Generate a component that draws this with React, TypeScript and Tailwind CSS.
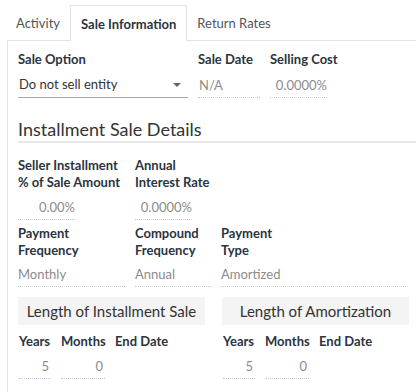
import React from "react";

const F = { fontFamily: "Lato, 'Open Sans', sans-serif" };

function Label({ children, w }: { children: React.ReactNode; w?: string }) {
  return (
    <div className={`text-[13px] font-bold leading-[17px] whitespace-nowrap text-[#2b3440] ${w ?? ""}`}>{children}</div>
  );
}

function Value({ children, w, right, pad }: { children: React.ReactNode; w: string; right?: boolean; pad?: string }) {
  return (
    <div
      className={`${w} h-[25px] border-b border-dotted border-[#c8c8c8] text-[13px] leading-[24px] text-[#8c8c8c] ${right ? "text-right" : ""} ${pad ?? ""}`}
    >
      {children}
    </div>
  );
}

export default function App() {
  return (
    <div style={F} className="w-[416px] h-[392px] bg-white overflow-hidden">
      {/* tabs */}
      <div className="flex pl-[6px] pt-[5px] h-[40px] relative z-10">
        <div className="px-[10px] pt-[3px] h-[35px] flex items-center text-[13px] text-[#555]">Activity</div>
        <div className="px-[10px] pt-[3px] h-[36px] flex items-center text-[13px] font-bold text-[#2b3440] border border-b-0 border-[#e3e3e3] bg-white">
          Sale Information
        </div>
        <div className="px-[10px] pt-[3px] h-[35px] flex items-center text-[13px] text-[#555]">Return Rates</div>
      </div>
      <div className="ml-[7px] border-l border-t border-[#e3e3e3] h-[352px] pl-[10px] pt-[10px]">
        {/* row 1 */}
        <div className="flex gap-[10px]">
          <div className="w-[170px]">
            <Label>Sale Option</Label>
            <div className="mt-[4px] h-[26px] border-b border-[#a8a8a8] flex items-center justify-between pl-px pr-[7px] text-[13px] text-[#333]">
              <span>Do not sell entity</span>
              <svg width="8" height="4" viewBox="0 0 8 4"><path d="M0 0h8L4 4z" fill="#666" /></svg>
            </div>
          </div>
          <div className="w-[62px]">
            <Label>Sale Date</Label>
            <Value w="w-[62px] mt-[5px]" pad="pl-px">N/A</Value>
          </div>
          <div className="w-[57px]">
            <Label>Selling Cost</Label>
            <Value w="w-[57px] mt-[5px]" right>0.0000%</Value>
          </div>
        </div>

        {/* heading */}
        <div className="mt-[19px] border-b-2 border-[#e8e8e8] h-[26px] text-[18px] leading-[24px] text-[#333] font-normal">
          Installment Sale Details
        </div>

        {/* row 2 */}
        <div className="flex gap-[10px] mt-[14px]">
          <div className="w-[107px]">
            <Label>Seller Installment<br />% of Sale Amount</Label>
            <Value w="w-[57px] mt-[4px]" right>0.00%</Value>
          </div>
          <div className="w-[80px]">
            <Label>Annual<br />Interest Rate</Label>
            <Value w="w-[57px] mt-[4px]" right>0.0000%</Value>
          </div>
        </div>

        {/* row 3 */}
        <div className="flex gap-[10px] mt-[5px]">
          <div className="w-[107px]">
            <Label>Payment<br />Frequency</Label>
            <Value w="w-[107px] mt-[3px]">Monthly</Value>
          </div>
          <div className="w-[76px]">
            <Label>Compound<br />Frequency</Label>
            <Value w="w-[76px] mt-[3px]">Annual</Value>
          </div>
          <div className="w-[187px]">
            <Label>Payment<br />Type</Label>
            <Value w="w-[187px] mt-[3px]">Amortized</Value>
          </div>
        </div>

        {/* row 4 */}
        <div className="flex gap-[17px] mt-[10px]">
          {["Length of Installment Sale", "Length of Amortization"].map((t) => (
            <div key={t} className="w-[187px]">
              <div className="h-[28px] bg-[#f4f4f4] flex items-center justify-center text-[15px] text-[#333]">{t}</div>
              <div className="flex gap-[10px] mt-[8px] pl-px">
                <div className="w-[32px]">
                  <Label>Years</Label>
                  <Value w="w-[32px] mt-[4px]" right pad="pr-[2px]">5</Value>
                </div>
                <div className="w-[44px]">
                  <Label>Months</Label>
                  <Value w="w-[44px] mt-[4px]" right pad="pr-[2px]">0</Value>
                </div>
                <div>
                  <Label>End Date</Label>
                </div>
              </div>
            </div>
          ))}
        </div>
      </div>
    </div>
  );
}
